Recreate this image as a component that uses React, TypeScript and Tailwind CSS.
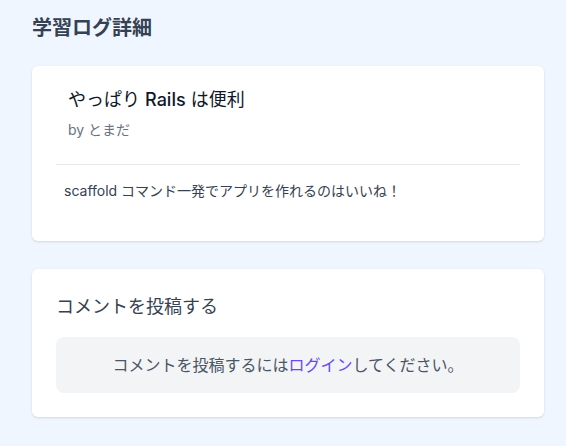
import React from 'react';

const font = { fontFamily: '"Inter", "Noto Sans CJK JP", sans-serif' };

function LogCard() {
  return (
    <div className="w-[512px] rounded-md bg-white px-6 pt-5 pb-6 shadow">
      <div className="border-b border-gray-200 px-3 pb-6">
        <h2 className="text-lg text-gray-900">
          やっぱり <span className="font-medium">Rails</span> は便利
        </h2>
        <p className="mt-1.5 text-sm text-gray-500">by とまだ</p>
      </div>
      <p className="px-2 pt-4 pb-4 text-sm text-gray-700">
        scaffold コマンド一発でアプリを作れるのはいいね！
      </p>
    </div>
  );
}

function CommentCard() {
  return (
    <div className="mt-7 w-[512px] rounded-md bg-white p-6 shadow">
      <h3 className="mb-4 text-lg text-gray-700">コメントを投稿する</h3>
      <div className="rounded-lg bg-gray-100 py-4 text-center text-base text-gray-600">
        コメントを投稿するには
        <a href="#" className="text-[#6a48f2] hover:underline">
          ログイン
        </a>
        してください。
      </div>
    </div>
  );
}

export default function App() {
  return (
    <div className="min-h-screen bg-blue-50 px-8 pt-[14px] pb-8" style={font}>
      <h1 className="mb-6 text-xl font-bold text-gray-700">学習ログ詳細</h1>
      <LogCard />
      <CommentCard />
    </div>
  );
}
